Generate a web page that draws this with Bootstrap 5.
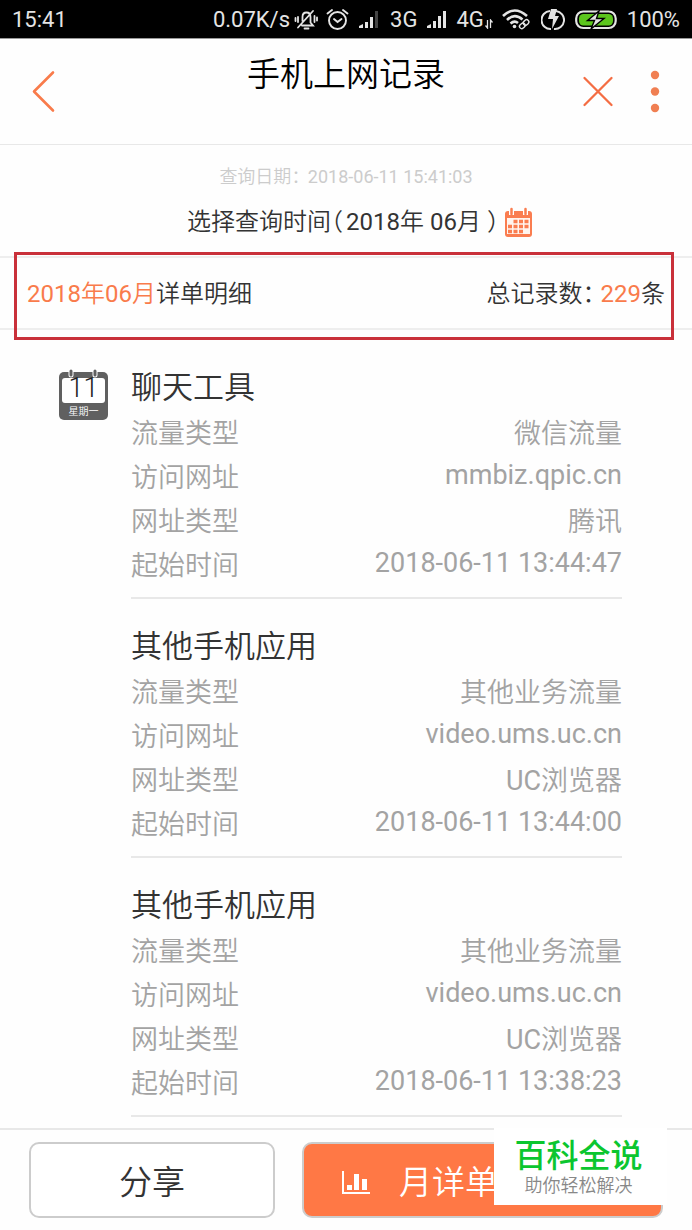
<!DOCTYPE html>
<html lang="zh-CN">
<head>
<meta charset="utf-8">
<meta name="viewport" content="width=device-width, initial-scale=1">
<title>手机上网记录</title>
<link href="https://cdn.jsdelivr.net/npm/bootstrap@5.3.0/dist/css/bootstrap.min.css" rel="stylesheet">
<style>
  :root { --accent: #f97b4b; --ink: #333; --muted: #a3a3a3; --rule: #e8e8e8; }
  body { font-family: Roboto, "Noto Sans CJK SC DemiLight", "Noto Sans CJK SC", sans-serif; color: var(--ink); background: #fefefe; font-weight: 400; }
  .accent { color: var(--accent); }
  .half { font-feature-settings: "halt"; }
  .half-open { margin-right: 3px; }

  .status-bar { height: 39px; background: #000; border-bottom: 1px solid #999; color: #e4e4e4; font-size: 22px; line-height: 36px; padding: 2px 12px 0; }
  .status-bar svg { display: block; }
  .gap-s { margin-left: 8px; }
  .gap-m { margin-left: 10px; }

  .title-bar { height: 106px; border-bottom: 1px solid var(--rule); padding: 0 25px; }
  .title-bar h1 { font-size: 33px; line-height: 48px; font-weight: 400; color: #000; margin: 12px 0 0; }
  .side { flex: 1 1 0; }
  .tools { gap: 21px; }
  .icon-btn { border: 0; background: none; padding: 0; line-height: 0; }

  .query { padding: 20px 0 16px; }
  .query-date { font-size: 18px; line-height: 24px; color: #ccc; }
  .query-date .half { margin-right: 3px; }
  .query-pick { font-size: 24px; line-height: 36px; padding: 15px 0 0 28px; gap: 5px; }

  .summary { border-top: 2px solid #eee; border-bottom: 2px solid #eee; font-size: 24px; line-height: 67px; padding: 3px 27px 0; }
  .highlight { position: absolute; inset: -6px 18px -12px 14px; border: 3px solid #c9303a; pointer-events: none; }

  .records { padding: 10px 70px 0 59px; }
  .day-mark { width: 72px; padding-top: 29px; }
  .record { border-bottom: 2px solid var(--rule); padding: 24px 0 9px; }
  .record h2 { font-size: 31px; line-height: 48px; font-weight: 400; margin: 0; }
  .record dl { font-size: 27px; line-height: 44px; color: var(--muted); margin: 0; }
  .record dt, .record dd { font-weight: 400; margin: 0; }
  .record dd.latin { line-height: 38px; }

  .actions { grid-template-columns: 15fr 22fr; margin-top: 11px; border-top: 2px solid var(--rule); padding: 12px 29px 12px; gap: 27px; }
  .actions .btn { height: 76px; border: 2px solid #ccc; border-radius: 10px; font-size: 33px; line-height: 48px; padding: 14px 12px 8px; }
  .btn-share { color: var(--ink); background: #fff; }
  .actions .btn-month { color: #fff; background: #ff7845; padding-left: 38px; gap: 29px; }
  .stamp { position: absolute; right: 25px; top: -2px; width: 173px; height: 77px; background: #fff; color: #888; font-size: 18px; line-height: 24px; padding: 5px 4px 0 0; }
  .stamp strong { font-family: "Noto Sans CJK SC", sans-serif; font-size: 32px; line-height: 41px; color: #0bc62f; font-weight: 500; }
</style>
</head>
<body>
<div class="d-flex flex-column min-vh-100">

  <div class="status-bar d-flex align-items-center">
    <span class="me-auto">15:41</span>
    <span>0.07K/s</span>
    <svg class="ms-1" width="24" height="24" viewBox="0 0 24 24" fill="none" stroke="#e4e4e4" stroke-width="1.8" stroke-linecap="round"><path d="M8 17.500h11l-2.500-3V9c0-3-2-4.500-4-4.500S8.500 6 8.500 9v4M10.500 20.500h4M4 19.500L19 3M4 9v5M1.500 10v3M20.500 8v6M23 9.500v3"/></svg>
    <svg class="gap-s" width="23" height="24" viewBox="0 0 23 24" fill="none" stroke="#e4e4e4" stroke-width="1.900" stroke-linecap="round"><circle cx="11.500" cy="12.500" r="8.500"/><path d="M8 11l3.500 3 4-3M1.500 5.500L6 2M21.500 5.500L17 2"/></svg>
    <svg class="gap-m" width="21" height="20" viewBox="0 0 21 20" fill="#e4e4e4"><path d="M0 18v-2l4-2v4zM6 12h3v6H6zM11 7h3v11h-3z"/><path d="M16 1h3v17h-3z" fill="#444"/></svg>
    <span class="gap-m">3G</span>
    <svg class="gap-m" width="21" height="20" viewBox="0 0 21 20" fill="#e4e4e4"><path d="M0 18v-2l4-2v4zM6 11h3v7H6zM11 6h3v12h-3zM16 1h3v17h-3z"/></svg>
    <span class="gap-s">4G</span>
    <svg class="mt-2" width="10" height="10" viewBox="0 0 10 10" fill="none" stroke="#e4e4e4" stroke-width="1.300"><path d="M3.500 1v8L1.500 6.500M6.500 9V1l2 2.500"/></svg>
    <svg class="gap-s" width="29" height="22" viewBox="0 0 29 22" fill="none" stroke="#e4e4e4" stroke-width="2.600"><path d="M1 7Q12.500-4 25 7M5 11Q12.500 3.500 20.500 10.500M8.500 14.500Q12.500 11 16 14"/><circle cx="12.500" cy="17.500" r="1.800" fill="#e4e4e4" stroke="none"/><g stroke-width="1.400" transform="rotate(-42 22 15)"><rect x="16.500" y="13" width="6" height="4.500" rx="2.200"/><rect x="21.500" y="13" width="6" height="4.500" rx="2.200"/></g></svg>
    <svg class="gap-m" width="24" height="22" viewBox="0 0 24 22"><path d="M9 2A9 9 0 0 0 10 20M15 2A9 9 0 0 1 13 20" fill="none" stroke="#e4e4e4" stroke-width="2"/><path d="M10 0h6l-2 7h4l-7 13 1-10H7z" fill="#e4e4e4"/></svg>
    <svg class="gap-m" width="42" height="20" viewBox="0 0 42 20"><rect x="1.200" y="1.500" width="39.500" height="16.500" rx="7" fill="none" stroke="#e4e4e4" stroke-width="2.200"/><rect x="4" y="4" width="34" height="11.500" rx="4.500" fill="#5cc61d"/><path d="M24 1L12.500 10.500h7L16 19l13-10.500h-7.500z" fill="#e4e4e4" stroke="#000" stroke-width="1.400"/></svg>
    <span class="gap-m">100%</span>
  </div>

  <header class="title-bar d-flex align-items-center">
    <div class="side">
      <button class="icon-btn" type="button" aria-label="返回">
        <svg width="36" height="48" viewBox="0 0 36 48" fill="none" stroke="#f97b4b" stroke-width="2.600" stroke-linecap="round" stroke-linejoin="round"><path d="M28 4.500L9 23.500l19 19"/></svg>
      </button>
    </div>
    <h1 class="align-self-start">手机上网记录</h1>
    <div class="side tools d-flex justify-content-end">
      <button class="icon-btn" type="button" aria-label="关闭">
        <svg width="48" height="48" viewBox="0 0 48 48" fill="none" stroke="#f46d43" stroke-width="2.300" stroke-linecap="round"><path d="M10.500 10l27 27M37.500 10l-27 27"/></svg>
      </button>
      <button class="icon-btn" type="button" aria-label="更多">
        <svg width="24" height="48" viewBox="0 0 24 48" fill="#f07f52"><circle cx="12" cy="7" r="4.200"/><circle cx="12" cy="23.500" r="4.200"/><circle cx="12" cy="40" r="4.200"/></svg>
      </button>
    </div>
  </header>

  <main>
    <section class="query text-center">
      <div class="query-date">查询日期<span class="half">：</span> 2018-06-11 15:41:03</div>
      <div class="query-pick d-flex justify-content-center align-items-center">
        <span>选择查询时间<span class="half half-open">（</span>2018年 06月 <span class="half">）</span></span>
        <button class="icon-btn" type="button" aria-label="选择月份">
          <svg width="29" height="31" viewBox="0 0 29 31"><rect x="1" y="4" width="27" height="26" rx="3" fill="#fa7d50"/><rect x="3" y="11" width="23" height="16" fill="#fff5ef"/><g stroke="#fa7d50" stroke-width="3.500" stroke-dasharray="4 1.500"><path d="M9.500 14.500H26M4 19.500H26M4 24.500H20"/></g><g stroke="#fff" stroke-width="5"><path d="M7.500 2v6M21.500 2v6"/></g><g stroke="#fa7d50" stroke-width="2.500" stroke-linecap="round"><path d="M7.500 2v5M21.500 2v5"/></g></svg>
        </button>
      </div>
    </section>

    <section class="summary position-relative d-flex justify-content-between">
      <span><span class="accent">2018年06月</span>详单明细</span>
      <span>总记录数<span class="half">：</span> <span class="accent">229</span>条</span>
      <div class="highlight"></div>
    </section>

    <section class="records d-flex">
      <div class="day-mark flex-shrink-0">
        <svg width="49" height="52" viewBox="0 0 49 52" role="img" aria-label="11 星期一"><rect x="0" y="3" width="49" height="48" rx="5" fill="#606060"/><rect x="3" y="9" width="43" height="25" rx="3" fill="#fff"/><g stroke="#fff" stroke-width="5" stroke-linecap="round"><path d="M12 3v3M36 3v3"/></g><g stroke="#606060" stroke-width="3" stroke-linecap="round"><path d="M12 2v4M36 2v4"/></g><text x="24.500" y="28" text-anchor="middle" font-size="27" font-weight="300" fill="#222">11</text><text x="24.500" y="46" text-anchor="middle" font-size="10" fill="#fff">星期一</text></svg>
      </div>
      <div class="flex-grow-1">
        <article class="record">
          <h2>聊天工具</h2>
          <dl>
            <div class="d-flex justify-content-between"><dt>流量类型</dt><dd>微信流量</dd></div>
            <div class="d-flex justify-content-between"><dt>访问网址</dt><dd class="latin">mmbiz.qpic.cn</dd></div>
            <div class="d-flex justify-content-between"><dt>网址类型</dt><dd>腾讯</dd></div>
            <div class="d-flex justify-content-between"><dt>起始时间</dt><dd class="latin">2018-06-11 13:44:47</dd></div>
          </dl>
        </article>
        <article class="record">
          <h2>其他手机应用</h2>
          <dl>
            <div class="d-flex justify-content-between"><dt>流量类型</dt><dd>其他业务流量</dd></div>
            <div class="d-flex justify-content-between"><dt>访问网址</dt><dd class="latin">video.ums.uc.cn</dd></div>
            <div class="d-flex justify-content-between"><dt>网址类型</dt><dd>UC浏览器</dd></div>
            <div class="d-flex justify-content-between"><dt>起始时间</dt><dd class="latin">2018-06-11 13:44:00</dd></div>
          </dl>
        </article>
        <article class="record">
          <h2>其他手机应用</h2>
          <dl>
            <div class="d-flex justify-content-between"><dt>流量类型</dt><dd>其他业务流量</dd></div>
            <div class="d-flex justify-content-between"><dt>访问网址</dt><dd class="latin">video.ums.uc.cn</dd></div>
            <div class="d-flex justify-content-between"><dt>网址类型</dt><dd>UC浏览器</dd></div>
            <div class="d-flex justify-content-between"><dt>起始时间</dt><dd class="latin">2018-06-11 13:38:23</dd></div>
          </dl>
        </article>
      </div>
    </section>
  </main>

  <footer class="actions position-relative d-grid">
    <button class="btn btn-share" type="button">分享</button>
    <button class="btn btn-month d-flex align-items-center" type="button">
      <svg width="28" height="24" viewBox="0 0 28 24" fill="#fff"><path d="M0 0h2v21h26v2H0zM5 14h5v5H5zM12 3h5v16h-5zM20 8h5v11h-5z"/></svg>
      <span>月详单</span>
    </button>
    <div class="stamp d-flex flex-column align-items-center">
      <strong>百科全说</strong>
      <span>助你轻松解决</span>
    </div>
  </footer>
</div>
<script src="https://cdn.jsdelivr.net/npm/bootstrap@5.3.0/dist/js/bootstrap.bundle.min.js"></script>
</body>
</html>
